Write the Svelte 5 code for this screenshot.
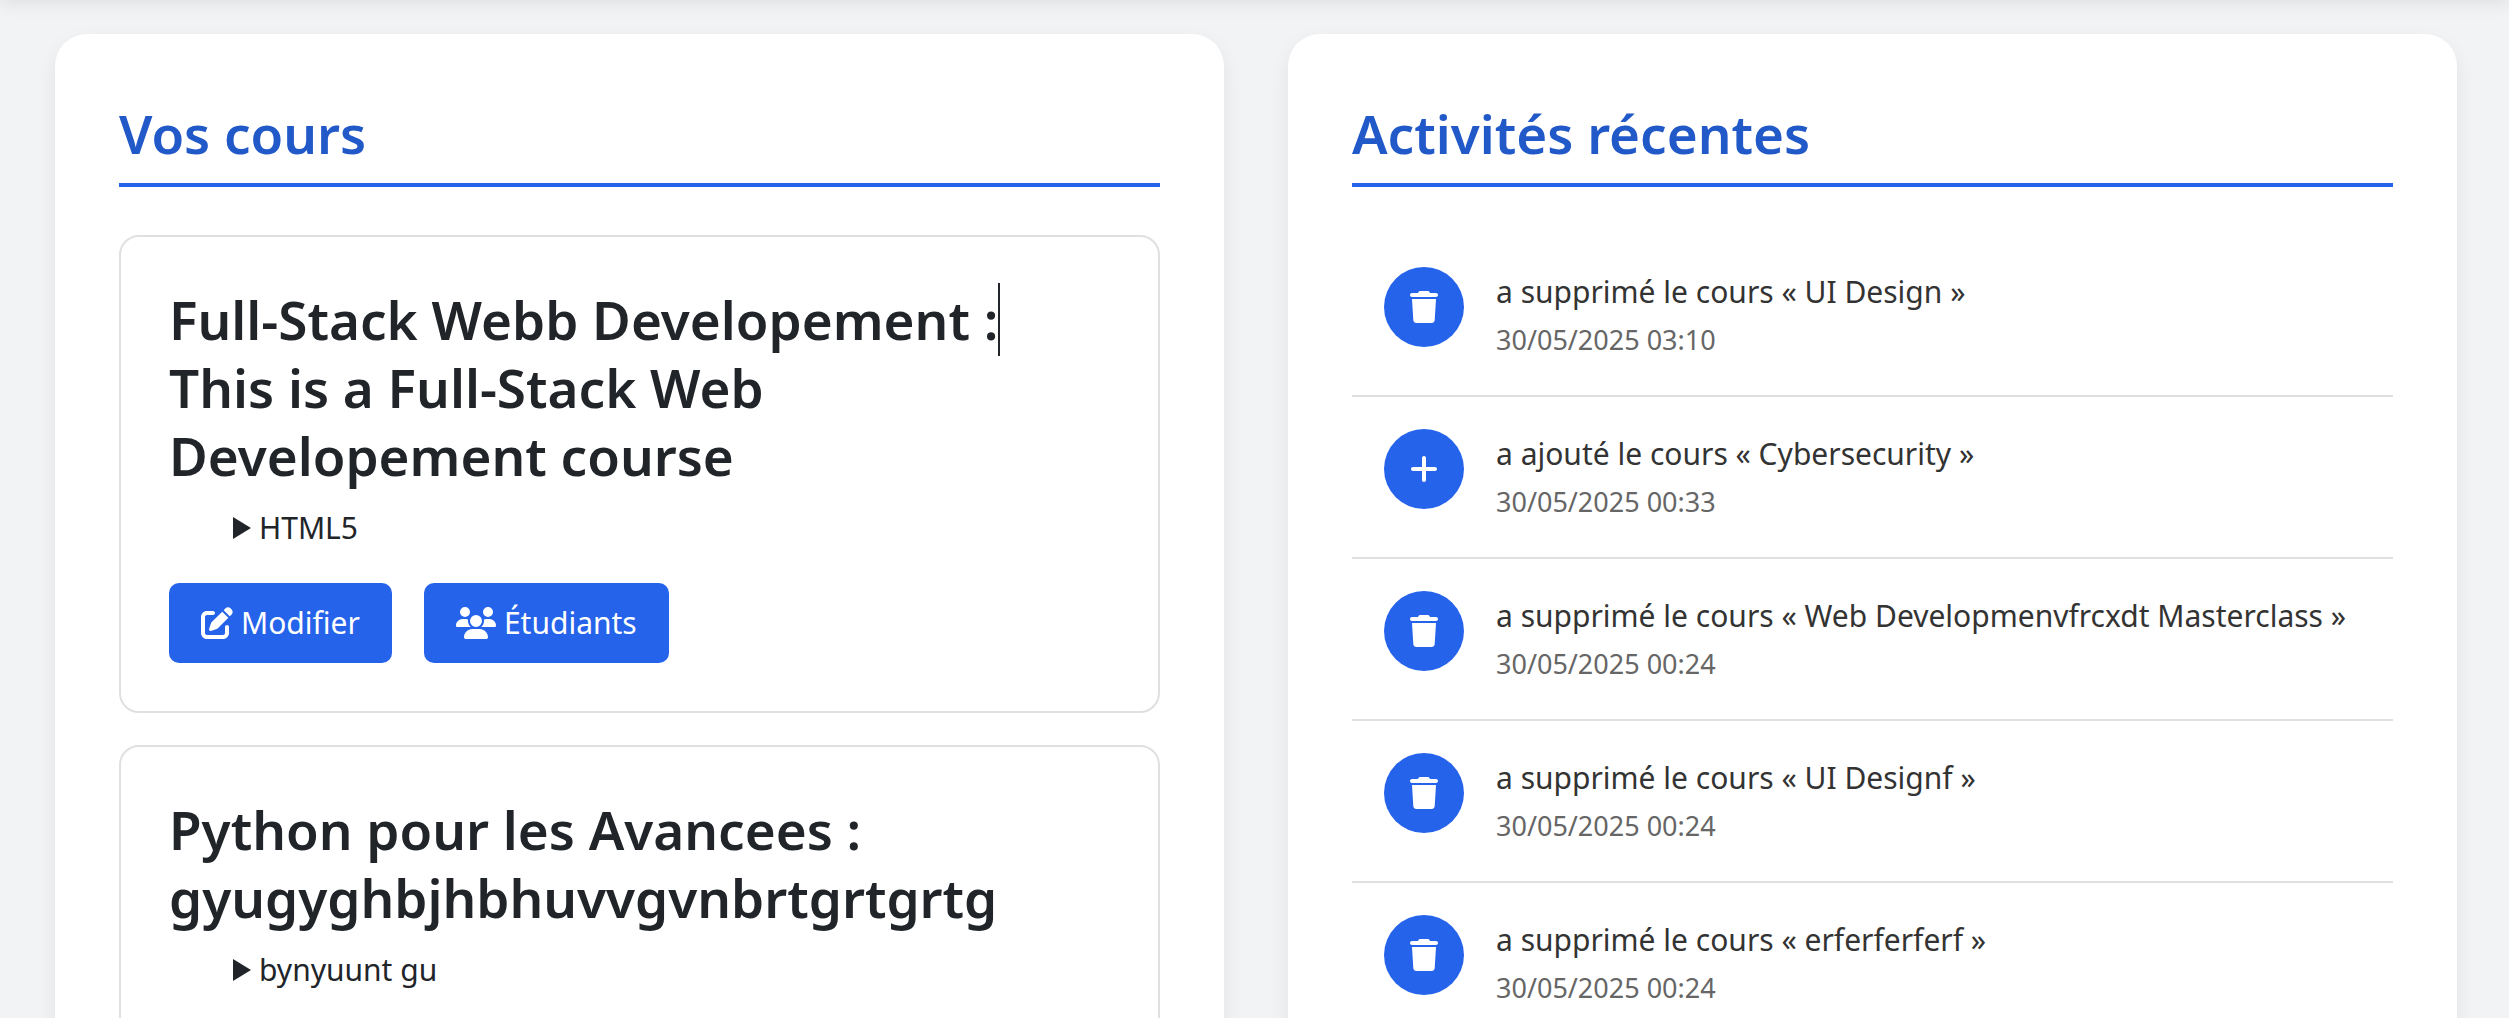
<script>
  const courses = [
    {
      title: 'Full-Stack Webb Developement : This is a Full-Stack Web Developement course',
      caretAfter: 'Full-Stack Webb Developement :',
      module: 'HTML5',
      actions: [
        { icon: 'edit', label: 'Modifier' },
        { icon: 'users', label: 'Étudiants' },
      ],
    },
    {
      title: 'Python pour les Avancees : gyugyghbjhbhuvvgvnbrtgrtgrtg',
      caretAfter: '',
      module: 'bynyuunt gu',
      actions: [],
    },
  ];

  const activities = [
    { icon: 'trash', text: 'a supprimé le cours « UI Design »', date: '30/05/2025 03:10' },
    { icon: 'plus', text: 'a ajouté le cours « Cybersecurity »', date: '30/05/2025 00:33' },
    { icon: 'trash', text: 'a supprimé le cours « Web Developmenvfrcxdt Masterclass »', date: '30/05/2025 00:24' },
    { icon: 'trash', text: 'a supprimé le cours « UI Designf »', date: '30/05/2025 00:24' },
    { icon: 'trash', text: 'a supprimé le cours « erferferferf »', date: '30/05/2025 00:24' },
  ];

  const icons = {
    edit: {
      width: 512,
      d: 'M471.6 21.7c-21.9-21.9-57.3-21.9-79.2 0L362.3 51.7l97.9 97.9 30.1-30.1c21.9-21.9 21.9-57.3 0-79.2L471.6 21.7zm-299.2 220c-6.1 6.1-10.8 13.6-13.5 21.9l-29.6 88.8c-2.9 8.6-.6 18.1 5.8 24.6s15.9 8.7 24.6 5.8l88.8-29.6c8.2-2.7 15.7-7.4 21.9-13.5L437.7 172.3 339.7 74.3 172.4 241.7zM96 64C43 64 0 107 0 160L0 416c0 53 43 96 96 96l256 0c53 0 96-43 96-96l0-96c0-17.7-14.3-32-32-32s-32 14.3-32 32l0 96c0 17.7-14.3 32-32 32L96 448c-17.7 0-32-14.3-32-32l0-256c0-17.7 14.3-32 32-32l96 0c17.7 0 32-14.3 32-32s-14.3-32-32-32L96 64z',
    },
    users: {
      width: 640,
      d: 'M144 0a80 80 0 1 1 0 160A80 80 0 1 1 144 0zM512 0a80 80 0 1 1 0 160A80 80 0 1 1 512 0zM0 298.7C0 239.8 47.8 192 106.7 192l42.7 0c15.9 0 31 3.5 44.6 9.7c-1.3 7.2-1.9 14.7-1.9 22.3c0 38.2 16.8 72.5 43.3 96c-.2 0-.4 0-.7 0L21.3 320C9.6 320 0 310.4 0 298.7zM405.3 320c-.2 0-.4 0-.7 0c26.6-23.5 43.3-57.8 43.3-96c0-7.6-.7-15-1.9-22.3c13.6-6.3 28.7-9.7 44.6-9.7l42.7 0C592.2 192 640 239.8 640 298.7c0 11.8-9.6 21.3-21.3 21.3l-213.3 0zM224 224a96 96 0 1 1 192 0 96 96 0 1 1 -192 0zM128 485.3C128 411.7 187.7 352 261.3 352l117.3 0C452.3 352 512 411.7 512 485.3c0 14.7-11.9 26.7-26.7 26.7l-330.7 0c-14.7 0-26.7-11.9-26.7-26.7z',
    },
    trash: {
      width: 448,
      d: 'M135.2 17.7L128 32 32 32C14.3 32 0 46.3 0 64S14.3 96 32 96l384 0c17.7 0 32-14.3 32-32s-14.3-32-32-32l-96 0-7.2-14.3C307.4 6.8 296.3 0 284.2 0L163.8 0c-12.1 0-23.2 6.8-28.6 17.7zM416 128L32 128 53.2 467c1.6 25.3 22.6 45 47.9 45l245.8 0c25.3 0 46.3-19.7 47.9-45L416 128z',
    },
    plus: {
      width: 448,
      d: 'M256 80c0-17.7-14.3-32-32-32s-32 14.3-32 32l0 144L48 224c-17.7 0-32 14.3-32 32s14.3 32 32 32l144 0 0 144c0 17.7 14.3 32 32 32s32-14.3 32-32l0-144 144 0c17.7 0 32-14.3 32-32s-14.3-32-32-32l-144 0 0-144z',
    },
  };
</script>

{#snippet icon(name)}
  <svg class="icon" viewBox="0 0 {icons[name].width} 512" aria-hidden="true">
    <path d={icons[name].d} />
  </svg>
{/snippet}

<div class="page">
  <div class="topbar"></div>
  <main class="columns">
    <section class="panel">
      <h2>Vos cours</h2>
      <div class="courses">
        {#each courses as course}
          <article class="course">
            <h3>
              {#if course.caretAfter}<span class="edited">{course.caretAfter}</span>{/if}
              {course.title.slice(course.caretAfter.length).trim()}
            </h3>
            <details>
              <summary>{course.module}</summary>
            </details>
            {#if course.actions.length}
              <div class="actions">
                {#each course.actions as action}
                  <button type="button">{@render icon(action.icon)}{action.label}</button>
                {/each}
              </div>
            {/if}
          </article>
        {/each}
      </div>
    </section>

    <section class="panel">
      <h2>Activités récentes</h2>
      <ul>
        {#each activities as activity}
          <li>
            <span class="badge">{@render icon(activity.icon)}</span>
            <div>
              <p>{activity.text}</p>
              <time>{activity.date}</time>
            </div>
          </li>
        {/each}
      </ul>
    </section>
  </main>
</div>

<style>
  :global(body) {
    background: #f2f3f5;
  }

  .page {
    position: relative;
    box-sizing: border-box;
    height: 100vh;
    overflow: hidden;
    padding: 34px 52px 0 55px;
    font-family: 'Segoe UI', 'Noto Sans', sans-serif;
    font-size: 30px;
    line-height: 48px;
    color: #212529;
  }

  .topbar {
    position: absolute;
    left: 0;
    right: 0;
    bottom: 100%;
    height: 80px;
    box-shadow: 0 4px 16px rgba(0, 0, 0, 0.08);
  }

  .columns {
    display: grid;
    grid-template-columns: 1fr 1fr;
    gap: 64px;
  }

  .panel {
    padding: 64px;
    border-radius: 32px;
    background: #fff;
    box-shadow: 0 8px 20px rgba(0, 0, 0, 0.07);
  }

  h2 {
    margin: 0 0 48px;
    padding-bottom: 13px;
    border-bottom: 4px solid #2563eb;
    font-size: 53px;
    font-weight: 600;
    line-height: 72px;
    color: #2259c9;
  }

  .courses {
    display: grid;
    gap: 32px;
  }

  .course {
    padding: 49px 48px 48px;
    border: 2px solid #e0e0e0;
    border-radius: 20px;
  }

  h3 {
    margin: 0 0 14px;
    font-size: 53px;
    font-weight: 600;
    line-height: 68px;
  }

  .edited {
    position: relative;
  }

  .edited::after {
    content: '';
    position: absolute;
    left: 100%;
    top: 0;
    width: 2px;
    height: 100%;
    background: #212529;
  }

  details {
    padding-left: 64px;
  }

  summary {
    display: flex;
    align-items: center;
    gap: 8px;
    list-style: none;
    cursor: pointer;
  }

  summary::before {
    content: '';
    width: 18px;
    height: 22px;
    background: currentColor;
    clip-path: polygon(0 0, 100% 50%, 0 100%);
  }

  .actions {
    display: flex;
    gap: 32px;
    margin-top: 31px;
  }

  button {
    display: flex;
    align-items: center;
    gap: 8px;
    height: 80px;
    padding: 0 32px;
    border: 0;
    border-radius: 10px;
    background: #2563eb;
    color: #fff;
    font: inherit;
    cursor: pointer;
  }

  .icon {
    display: block;
    height: 32px;
    fill: #fff;
  }

  ul {
    margin: 0;
    padding: 0;
    list-style: none;
  }

  li {
    display: flex;
    gap: 32px;
    padding: 32px;
    border-bottom: 2px solid #e0e0e0;
  }

  .badge {
    display: flex;
    flex: none;
    align-items: center;
    justify-content: center;
    width: 80px;
    height: 80px;
    border-radius: 50%;
    background: #2563eb;
  }

  p {
    margin: 0;
    line-height: 50px;
    color: #333;
  }

  time {
    display: block;
    font-size: 27px;
    line-height: 46px;
    color: #666;
  }
</style>
